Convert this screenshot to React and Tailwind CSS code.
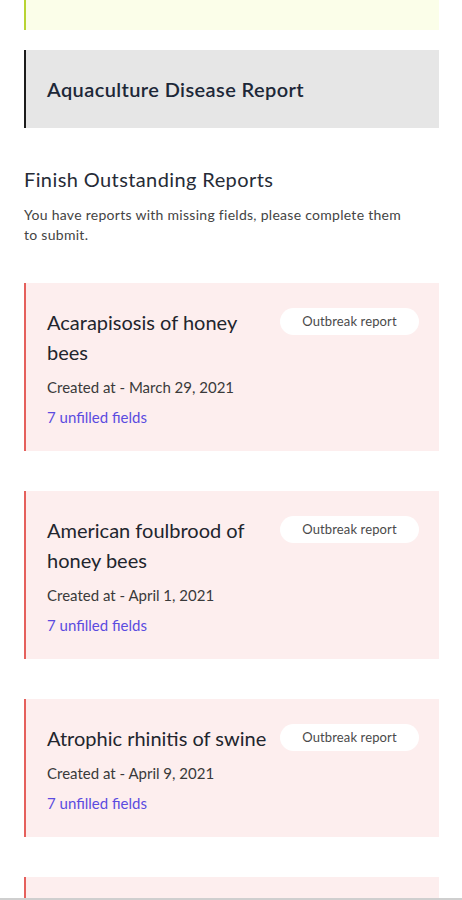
import React from "react";

const reports = [
  { title: "Acarapisosis of honey bees", date: "March 29, 2021" },
  { title: "American foulbrood of honey bees", date: "April 1, 2021" },
  { title: "Atrophic rhinitis of swine", date: "April 9, 2021" },
];

function ReportCard({ title, date }) {
  return (
    <div className="border-l-2 border-[#e5605c] bg-[#fdeeee] pl-[21px] pr-[20px] pt-[24px] pb-[24px]">
      <div className="flex items-start gap-[4px]">
        <div className="flex-1 text-[20px] leading-[30px] text-[#22252d]">{title}</div>
        <div className="mt-[1px] flex h-[27px] w-[139px] shrink-0 items-center justify-center rounded-full bg-white text-[13px] tracking-[0.01em] text-[#4a4a4a]">
          Outbreak report
        </div>
      </div>
      <div className="mt-[10px] text-[15px] leading-[20px] text-[#3a3a3a]">Created at - {date}</div>
      <div className="mt-[10px] text-[15px] leading-[20px] text-[#5b4be0]">7 unfilled fields</div>
    </div>
  );
}

export default function App() {
  return (
    <div
      className="flex h-[900px] w-full flex-col overflow-hidden bg-white"
      style={{ fontFamily: "Lato, 'Noto Sans', sans-serif" }}
    >
      <div className="flex-1 overflow-hidden pl-[24px] pr-[23px]">
        <div className="h-[30px] border-l-2 border-[#b8d432] bg-[#fbfee9]" />
        <div className="mt-[20px] flex h-[78px] items-center border-l-2 border-[#1c1c1c] bg-[#e6e6e6] pl-[21px]">
          <span className="text-[20px] font-semibold tracking-[0.02em] text-[#1d2838]">Aquaculture Disease Report</span>
        </div>
        <div className="mt-[38px] text-[20px] leading-[26px] tracking-[0.02em] text-[#262b36]">Finish Outstanding Reports</div>
        <div className="mt-[13px] pr-[26px] text-[14px] leading-[20px] tracking-[0.02em] text-[#444444]">
          You have reports with missing fields, please complete them to submit.
        </div>
        <div className="mt-[38px] flex flex-col gap-[40px]">
          {reports.map((r) => (
            <ReportCard key={r.title} title={r.title} date={r.date} />
          ))}
          <div className="h-[140px] border-l-2 border-[#e5605c] bg-[#fdeeee]" />
        </div>
      </div>
      <div className="h-[2px] shrink-0 bg-[#cfcfcf]" />
    </div>
  );
}
